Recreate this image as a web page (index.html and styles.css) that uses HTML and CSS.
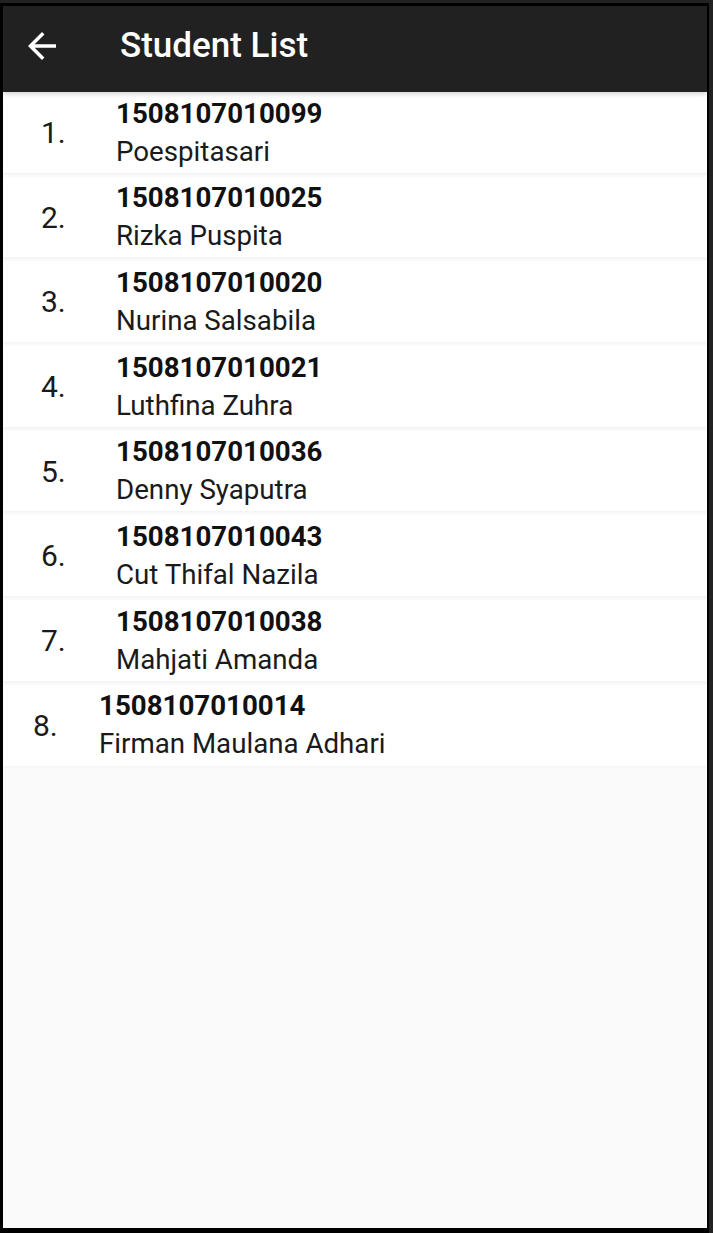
FILE: index.html
```html
<!DOCTYPE html>
<html lang="id">
<head>
<meta charset="utf-8">
<title>Student List</title>
<link rel="stylesheet" href="styles.css">
</head>
<body>
<div class="frame">
  <header class="appbar">
    <button class="back" aria-label="Back">
      <svg viewBox="0 0 24 24" width="42" height="42"><path fill="#fff" d="M20 11H7.83l5.59-5.59L12 4l-8 8 8 8 1.41-1.41L7.83 13H20v-2z"/></svg>
    </button>
    <h1 class="title">Student List</h1>
  </header>
  <main class="list">
    <div class="card"><div class="num">1.</div><div class="info"><div class="nim">1508107010099</div><div class="name">Poespitasari</div></div></div>
    <div class="card"><div class="num">2.</div><div class="info"><div class="nim">1508107010025</div><div class="name">Rizka Puspita</div></div></div>
    <div class="card"><div class="num">3.</div><div class="info"><div class="nim">1508107010020</div><div class="name">Nurina Salsabila</div></div></div>
    <div class="card"><div class="num">4.</div><div class="info"><div class="nim">1508107010021</div><div class="name">Luthfina Zuhra</div></div></div>
    <div class="card"><div class="num">5.</div><div class="info"><div class="nim">1508107010036</div><div class="name">Denny Syaputra</div></div></div>
    <div class="card"><div class="num">6.</div><div class="info"><div class="nim">1508107010043</div><div class="name">Cut Thifal Nazila</div></div></div>
    <div class="card"><div class="num">7.</div><div class="info"><div class="nim">1508107010038</div><div class="name">Mahjati Amanda</div></div></div>
    <div class="card card-wide"><div class="num">8.</div><div class="info"><div class="nim">1508107010014</div><div class="name">Firman Maulana Adhari</div></div></div>
  </main>
</div>
</body>
</html>
```

FILE: styles.css
```css
html, body {
  margin: 0;
  padding: 0;
  background: #222;
  height: 1233px;
  overflow: hidden;
}
body {
  padding-top: 3px;
  padding-right: 4px;
  box-sizing: border-box;
  font-family: Roboto, "Liberation Sans", sans-serif;
}
.frame {
  border-style: solid;
  border-color: #000;
  border-width: 3px 2px 5px 3px;
  height: 1230px;
  box-sizing: border-box;
  background: #fafafa;
  display: flex;
  flex-direction: column;
  overflow: hidden;
}
.appbar {
  position: relative;
  z-index: 2;
  height: 86px;
  flex: none;
  background: #212121;
  display: flex;
  align-items: center;
  box-shadow: 0 2px 5px rgba(0,0,0,0.18);
  padding-bottom: 6px;
  box-sizing: border-box;
}
.back {
  background: none;
  border: 0;
  padding: 0;
  margin: 0 0 0 18px;
  width: 42px;
  height: 42px;
  display: flex;
}
.title {
  margin: 0 0 0 57px;
  color: #fff;
  font-size: 35px;
  font-weight: 500;
  line-height: 40px;
}
.list {
  display: flex;
  flex-direction: column;
  gap: 4px;
}
.card {
  background: #fff;
  display: flex;
  align-items: center;
  padding: 2.5px 0 2.2px;
  box-shadow: 0 1px 2px rgba(0,0,0,0.04);
}
.num {
  width: 75px;
  padding-left: 38px;
  flex: none;
  font-size: 30px;
  color: #1a1a1a;
  margin-top: 0;
}
.card-wide .num {
  width: 66px;
  padding-left: 30px;
}
.info {
  display: flex;
  flex-direction: column;
}
.nim {
  font-size: 27.7px;
  font-weight: 700;
  line-height: 38px;
  color: #111;
}
.name {
  font-size: 27.7px;
  line-height: 38px;
  color: #1a1a1a;
}
```
